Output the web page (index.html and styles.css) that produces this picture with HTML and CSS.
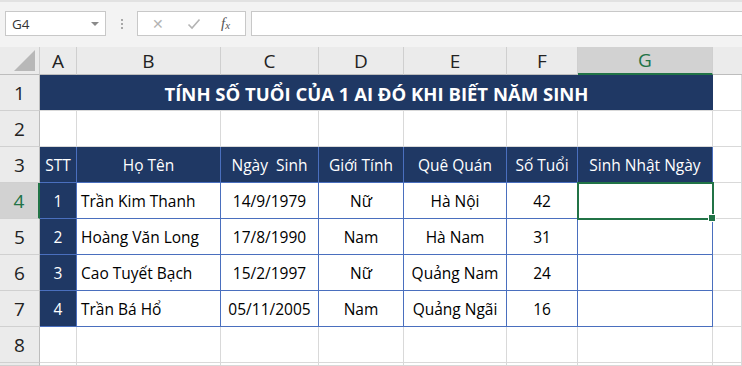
FILE: index.html
```html
<!DOCTYPE html>
<html lang="vi">
<head>
<meta charset="utf-8">
<title>Sheet</title>
<link rel="stylesheet" href="styles.css">
</head>
<body>
<div class="app">
  <div class="toolbar">
    <div class="namebox"><span class="ref">G4</span><span class="caret"></span></div>
    <div class="sep"><i></i><i></i><i></i></div>
    <div class="fxbox">
      <span class="ico x">&#x2715;</span>
      <svg class="ico check" width="14" height="12" viewBox="0 0 14 12"><path d="M1.5 6.5 L5 10 L12.5 1.5" fill="none" stroke="#b4b4b4" stroke-width="1.6"/></svg>
      <span class="fx">f<sub>x</sub></span>
    </div>
    <div class="input"></div>
  </div>
  <div class="sheet">
    <div class="corner"><svg width="21" height="21" viewBox="0 0 21 21"><polygon points="21,0 21,21 0,21" fill="#b8b8b8"/></svg></div>
    <div class="ch">A</div><div class="ch">B</div><div class="ch">C</div><div class="ch">D</div><div class="ch">E</div><div class="ch">F</div><div class="ch sel">G</div><div class="ch last"></div>

    <div class="rh">1</div>
    <div class="title">TÍNH SỐ TUỔI CỦA 1 AI ĐÓ KHI BIẾT NĂM SINH</div>
    <div class="c"></div>

    <div class="rh">2</div>
    <div class="c"></div><div class="c"></div><div class="c"></div><div class="c"></div><div class="c"></div><div class="c"></div><div class="c"></div><div class="c"></div>

    <div class="rh">3</div>
    <div class="t hd">STT</div><div class="t hd">Họ Tên</div><div class="t hd pre">Ngày  Sinh</div><div class="t hd">Giới Tính</div><div class="t hd">Quê Quán</div><div class="t hd">Số Tuổi</div><div class="t hd">Sinh Nhật Ngày</div>
    <div class="c"></div>

    <div class="rh rsel">4</div>
    <div class="t idx">1</div><div class="t left">Trần Kim Thanh</div><div class="t">14/9/1979</div><div class="t">Nữ</div><div class="t">Hà Nội</div><div class="t">42</div><div class="t active"></div>
    <div class="c"></div>

    <div class="rh">5</div>
    <div class="t idx">2</div><div class="t left">Hoàng Văn Long</div><div class="t">17/8/1990</div><div class="t">Nam</div><div class="t">Hà Nam</div><div class="t">31</div><div class="t"></div>
    <div class="c"></div>

    <div class="rh">6</div>
    <div class="t idx">3</div><div class="t left">Cao Tuyết Bạch</div><div class="t">15/2/1997</div><div class="t">Nữ</div><div class="t">Quảng Nam</div><div class="t">24</div><div class="t"></div>
    <div class="c"></div>

    <div class="rh">7</div>
    <div class="t idx">4</div><div class="t left">Trần Bá Hổ</div><div class="t">05/11/2005</div><div class="t">Nam</div><div class="t">Quảng Ngãi</div><div class="t">16</div><div class="t"></div>
    <div class="c"></div>

    <div class="rh">8</div>
    <div class="c"></div><div class="c"></div><div class="c"></div><div class="c"></div><div class="c"></div><div class="c"></div><div class="c"></div><div class="c"></div>

    <div class="rh"></div>
    <div class="c"></div><div class="c"></div><div class="c"></div><div class="c"></div><div class="c"></div><div class="c"></div><div class="c"></div><div class="c"></div>
  </div>
</div>
</body>
</html>
```
FILE: styles.css
```css
* { box-sizing: border-box; }
html, body { margin: 0; padding: 0; }
body {
  width: 742px;
  height: 366px;
  overflow: hidden;
  background: #ffffff;
  font-family: "Open Sans", "Noto Sans", sans-serif;
  color: #000;
}
.app { width: 742px; }

.toolbar {
  height: 47px;
  background: #f3f3f3;
  border-top: 2px solid #e2e2e2;
  display: flex;
  align-items: flex-start;
  padding: 9px 0 0 5px;
}
.namebox {
  width: 101px;
  height: 25px;
  background: #fff;
  border: 1px solid #c8c8c8;
  display: flex;
  align-items: center;
  justify-content: space-between;
  padding: 0 6px 0 6px;
  font-size: 13.5px;
  color: #333;
}
.caret {
  width: 0; height: 0;
  border-left: 4px solid transparent;
  border-right: 4px solid transparent;
  border-top: 4px solid #8a8a8a;
}
.sep {
  width: 31px;
  height: 25px;
  display: flex;
  flex-direction: column;
  align-items: center;
  justify-content: center;
  gap: 2px;
}
.sep i { display: block; width: 2px; height: 2px; background: #a8a8a8; }
.fxbox {
  width: 109px;
  height: 25px;
  background: #fff;
  border: 1px solid #c8c8c8;
  display: flex;
  align-items: center;
  padding-left: 13px;
}
.ico { color: #b4b4b4; }
.x { font-size: 14px; width: 14px; text-align: center; }
.check { margin-left: 22px; }
.fx {
  margin-left: 20px;
  font-family: "Liberation Serif", serif;
  font-style: italic;
  font-size: 15px;
  color: #555;
}
.fx sub { font-size: 11px; vertical-align: -1px; }
.input {
  flex: 1;
  height: 25px;
  margin-left: 5px;
  background: #fff;
  border: 1px solid #c8c8c8;
  border-right: none;
}

.sheet {
  display: grid;
  grid-template-columns: 40px 37px 144px 98px 85px 103px 71px 135px 1fr;
  grid-template-rows: 28px repeat(8, 36px) 3px;
  overflow: hidden;
}
.corner {
  background: #ebebeb;
  border-right: 1px solid #cfcfcf;
  border-bottom: 1px solid #bdbdbd;
  display: flex;
  align-items: flex-end;
  justify-content: flex-end;
  padding: 0 4px 3px 0;
}
.ch {
  background: #ebebeb;
  border-right: 1px solid #cfcfcf;
  border-bottom: 1px solid #bdbdbd;
  display: flex;
  align-items: center;
  justify-content: center;
  font-size: 19px;
  color: #222;
}
.ch.sel {
  background: #d2d2d2;
  color: #217346;
  border-bottom: 2px solid #217346;
}
.ch.last { border-right: none; }
.rh {
  background: #ebebeb;
  border-right: 1px solid #bdbdbd;
  border-bottom: 1px solid #d0d0d0;
  display: flex;
  align-items: center;
  justify-content: center;
  font-size: 19px;
  color: #222;
  padding-top: 1px;
  overflow: hidden;
}
.rh.rsel {
  background: #d2d2d2;
  color: #217346;
  border-right: 2px solid #217346;
}
.c {
  border-right: 1px solid #d9d9d9;
  border-bottom: 1px solid #d9d9d9;
}
.title {
  grid-column: span 7;
  background: #1f3864;
  color: #fff;
  font-weight: 700;
  font-size: 18.5px;
  display: flex;
  align-items: center;
  justify-content: center;
  border-bottom: 1px solid #d9d9d9;
  border-top: 1px solid #1f3864;
}
.t {
  border-right: 1px solid #4a6fbe;
  border-bottom: 1px solid #4a6fbe;
  display: flex;
  align-items: center;
  justify-content: center;
  font-size: 15.5px;
  color: #000;
  white-space: nowrap;
}
.t.left { justify-content: flex-start; padding-left: 4px; }
.t.pre { white-space: pre; }
.t.hd, .t.idx {
  background: #1f3864;
  color: #fff;
}
.t.active {
  position: relative;
  outline: 2px solid #217346;
  outline-offset: -1px;
}
.t.active::after {
  content: "";
  position: absolute;
  right: -4px;
  bottom: -4px;
  width: 6px;
  height: 6px;
  background: #217346;
  border: 1px solid #fff;
  z-index: 2;
}
```
